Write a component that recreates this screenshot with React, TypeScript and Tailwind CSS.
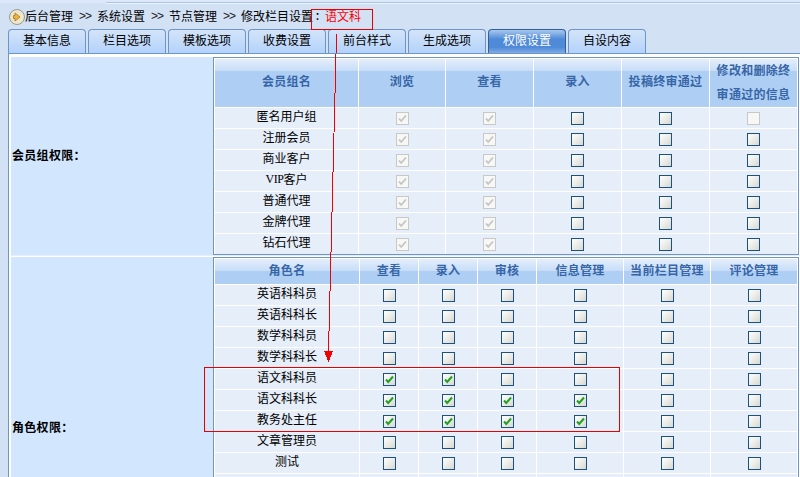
const sans = "font-['Noto_Sans_CJK_SC','Liberation_Sans',sans-serif]";

const tabs = ['基本信息', '栏目选项', '模板选项', '收费设置', '前台样式', '生成选项', '权限设置', '自设内容'];

// 1 = disabled ticked, 2 = empty, 3 = disabled empty
const memberRows: [React.ReactNode, number[]][] = [
  ['匿名用户组', [1, 1, 2, 2, 3]],
  ['注册会员', [1, 1, 2, 2, 2]],
  ['商业客户', [1, 1, 2, 2, 2]],
  [<><span className="font-['Liberation_Serif'] tracking-[-0.4px]">VIP</span>客户</>, [1, 1, 2, 2, 2]],
  ['普通代理', [1, 1, 2, 2, 2]],
  ['金牌代理', [1, 1, 2, 2, 2]],
  ['钻石代理', [1, 1, 2, 2, 2]],
];

// 0 = empty, 1 = green tick
const roleRows: [string, number[]][] = [
  ['英语科科员', [0, 0, 0, 0, 0, 0]],
  ['英语科科长', [0, 0, 0, 0, 0, 0]],
  ['数学科科员', [0, 0, 0, 0, 0, 0]],
  ['数学科科长', [0, 0, 0, 0, 0, 0]],
  ['语文科科员', [1, 1, 0, 0, 0, 0]],
  ['语文科科长', [1, 1, 1, 1, 0, 0]],
  ['教务处主任', [1, 1, 1, 1, 0, 0]],
  ['文章管理员', [0, 0, 0, 0, 0, 0]],
  ['测试', [0, 0, 0, 0, 0, 0]],
  ['', []],
];

function Box({ kind }: { kind: 'empty' | 'green' | 'grey' | 'off' }) {
  const disabled = kind === 'grey' || kind === 'off';
  return (
    <span
      className={
        'inline-flex w-[13px] h-[13px] border items-center justify-center ' +
        (disabled
          ? 'border-[#c8c8c8] bg-[#f7f7f5]'
          : 'border-[#1c5180] bg-[linear-gradient(135deg,#ffffff,#d8d8d2)]')
      }
    >
      {kind === 'green' && (
        <svg width="9" height="9" viewBox="0 0 9 9">
          <path d="M1 4.5 L3.2 7 L8 1.5" fill="none" stroke="#21a121" strokeWidth="2" />
        </svg>
      )}
      {kind === 'grey' && (
        <svg width="9" height="9" viewBox="0 0 9 9">
          <path d="M1 4.5 L3.2 7 L8 1.5" fill="none" stroke="#c4c4c4" strokeWidth="1.8" />
        </svg>
      )}
    </span>
  );
}

function HeadCell({ width, height, children }: { width: string; height: string; children: React.ReactNode }) {
  return (
    <div
      className={
        width + ' ' + height +
        ' shrink-0 flex items-center justify-center pb-[4px] text-center font-bold text-[12px] tracking-[0.3px] text-[#3766a8] border-r border-white bg-[linear-gradient(#e4eefb,#c6ddf8_12px,#aecff3_12px)]'
      }
    >
      {children}
    </div>
  );
}

function Row({ children }: { children: React.ReactNode }) {
  return <div className="flex h-[21px] border-t border-white">{children}</div>;
}

function Cell({ width, name, children }: { width: string; name?: boolean; children: React.ReactNode }) {
  return (
    <div
      className={
        width +
        ' shrink-0 flex items-center justify-center bg-[#e6eef9] border-r border-white text-[12px] text-black' +
        (name ? ' pb-[4px]' : '')
      }
    >
      {children}
    </div>
  );
}

function MemberTable() {
  const w = ['w-[87px]', 'w-[88px]', 'w-[88px]', 'w-[88px]', 'w-[88px]'];
  return (
    <div className="border border-[#6f94c8] bg-white pt-px pl-px">
      <div className="flex">
        <HeadCell width="w-[144px]" height="h-[48px]">会员组名</HeadCell>
        <HeadCell width={w[0]} height="h-[48px]">浏览</HeadCell>
        <HeadCell width={w[1]} height="h-[48px]">查看</HeadCell>
        <HeadCell width={w[2]} height="h-[48px]">录入</HeadCell>
        <HeadCell width={w[3]} height="h-[48px]">投稿终审通过</HeadCell>
        <HeadCell width={w[4]} height="h-[48px]">
          <span className="leading-[24px] mt-[2px]">修改和删除终<br />审通过的信息</span>
        </HeadCell>
      </div>
      {memberRows.map(([name, marks], r) => (
        <Row key={r}>
          <Cell width="w-[144px]" name>{name}</Cell>
          {marks.map((m, i) => (
            <Cell key={i} width={w[i]}>
              <Box kind={m === 1 ? 'grey' : m === 3 ? 'off' : 'empty'} />
            </Cell>
          ))}
        </Row>
      ))}
    </div>
  );
}

function RoleTable() {
  const w = ['w-[59px]', 'w-[59px]', 'w-[59px]', 'w-[87px]', 'w-[87px]', 'w-[87px]'];
  const heads = ['查看', '录入', '审核', '信息管理', '当前栏目管理', '评论管理'];
  return (
    <div className="border border-[#6f94c8] bg-white pt-px pl-px">
      <div className="flex">
        <HeadCell width="w-[145px]" height="h-[25px]">角色名</HeadCell>
        {heads.map((h, i) => (
          <HeadCell key={h} width={w[i]} height="h-[25px]">{h}</HeadCell>
        ))}
      </div>
      {roleRows.map(([name, marks], r) => (
        <Row key={r}>
          <Cell width="w-[145px]" name>{name}</Cell>
          {w.map((cw, i) => (
            <Cell key={i} width={cw}>
              {marks.length > 0 && <Box kind={marks[i] === 1 ? 'green' : 'empty'} />}
            </Cell>
          ))}
        </Row>
      ))}
    </div>
  );
}

function Sep() {
  return <span className="ml-[6px] mr-[6px] w-[12px] font-['Liberation_Sans'] tracking-[-1px] text-[#222]">&gt;&gt;</span>;
}

export default function App() {
  return (
    <div className={sans + ' relative w-[800px] h-[477px] overflow-hidden bg-[#d3e1f5] text-[12px] text-black'}>
      {/* top strip */}
      <div className="h-[3px] bg-[#dce8fa]">
        <div className="h-[3px] ml-[106px] border-b border-[#a5c3ee]" />
      </div>
      <div className="h-px ml-[106px] bg-[#eef4fc]" />

      {/* breadcrumb */}
      <div className="h-[25px] pl-[9px] flex items-center leading-none whitespace-nowrap">
        <svg width="16" height="16" viewBox="0 0 16 16" className="shrink-0">
          <circle cx="8" cy="8" r="7.5" fill="#ece6cf" stroke="#9a9a8a" />
          <path d="M6 4 L11 8 L6 12 V9.5 H4.5 V6.5 H6 Z" fill="#eeb53a" stroke="#a8761a" strokeWidth="0.8" />
        </svg>
        <div className="flex items-center pb-[2px]">
          <span>后台管理</span>
          <Sep />
          <span>系统设置</span>
          <Sep />
          <span>节点管理</span>
          <Sep />
          <span>修改栏目设置</span>
          <span className="font-bold ml-[2px] w-[10px] text-[10px]">：</span>
          <span className="text-[#ff0000]">语文科</span>
        </div>
      </div>

      {/* tabs */}
      <div className="flex gap-[2px] pl-[8px] h-[24px]">
        {tabs.map((t) => {
          const active = t === '权限设置';
          return (
            <div
              key={t}
              className={
                'w-[78px] h-[24px] flex items-center justify-center pb-[3px] rounded-t-[4px] border border-b-0 leading-none ' +
                (active
                  ? 'border-[#2f5f9f] text-white bg-[linear-gradient(#a9c8ee,#4f8ad8_40%,#4f8ad8_75%,#7fabe6)]'
                  : 'border-[#6f94c8] text-black bg-[linear-gradient(#d4e4f9,#b3d2fb)]')
              }
            >
              {t}
            </div>
          );
        })}
      </div>

      {/* content */}
      <div className="ml-[8px] w-[792px] border border-[#6f94c8] border-r-0 bg-white pt-[3px] pl-[2px]">
        <div className="flex border-b border-[#e6eef9]">
          <div className="w-[202px] shrink-0 bg-[#d2e7fe] flex items-center pl-px pb-[2px] font-bold text-[12px] tracking-[0.3px]">
            会员组权限：
          </div>
          <div className="w-[586px]">
            <MemberTable />
          </div>
        </div>
        <div className="flex mt-px">
          <div className="w-[202px] shrink-0 bg-[#d2e7fe] flex items-center pl-px font-bold text-[12px] tracking-[0.3px] h-[340px]">
            角色权限：
          </div>
          <div className="w-[586px]">
            <RoleTable />
          </div>
        </div>
      </div>

      {/* red annotations drawn over the page */}
      <svg width="800" height="477" shapeRendering="crispEdges" className="absolute left-0 top-0 pointer-events-none">
        <rect x="311.5" y="9.5" width="61" height="20" fill="none" stroke="#e60000" />
        <rect x="204.5" y="367.5" width="415" height="64" fill="none" stroke="#e60000" />
        <path d="M336.5 34 L328.5 351" fill="none" stroke="#f00000" />
        <path d="M324 351 H333 L328.5 362 Z" fill="#f00000" />
      </svg>
    </div>
  );
}
